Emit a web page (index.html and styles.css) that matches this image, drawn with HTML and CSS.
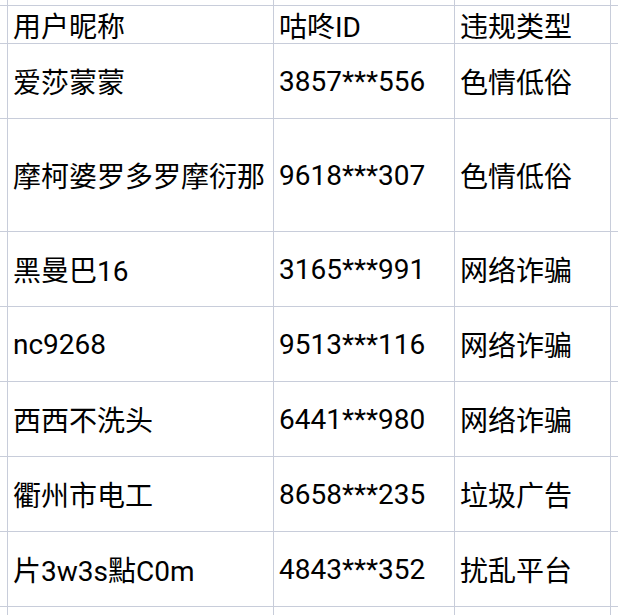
FILE: index.html
```html
<!DOCTYPE html>
<html lang="zh-CN">
<head>
    <meta charset="UTF-8">
    <title>违规用户列表</title>
    <link rel="stylesheet" href="styles.css">
</head>
<body>
    <div class="sheet">
        <!-- top spacer row -->
        <div class="cell"></div><div class="cell"></div><div class="cell"></div><div class="cell"></div><div class="cell"></div>

        <div class="cell"></div>
        <div class="cell">用户昵称</div>
        <div class="cell">咕咚ID</div>
        <div class="cell">违规类型</div>
        <div class="cell"></div>

        <div class="cell"></div>
        <div class="cell">爱莎蒙蒙</div>
        <div class="cell">3857***556</div>
        <div class="cell">色情低俗</div>
        <div class="cell"></div>

        <div class="cell"></div>
        <div class="cell">摩柯婆罗多罗摩衍那</div>
        <div class="cell">9618***307</div>
        <div class="cell">色情低俗</div>
        <div class="cell"></div>

        <div class="cell"></div>
        <div class="cell">黑曼巴16</div>
        <div class="cell">3165***991</div>
        <div class="cell">网络诈骗</div>
        <div class="cell"></div>

        <div class="cell"></div>
        <div class="cell">nc9268</div>
        <div class="cell">9513***116</div>
        <div class="cell">网络诈骗</div>
        <div class="cell"></div>

        <div class="cell"></div>
        <div class="cell">西西不洗头</div>
        <div class="cell">6441***980</div>
        <div class="cell">网络诈骗</div>
        <div class="cell"></div>

        <div class="cell"></div>
        <div class="cell">衢州市电工</div>
        <div class="cell">8658***235</div>
        <div class="cell">垃圾广告</div>
        <div class="cell"></div>

        <div class="cell"></div>
        <div class="cell">片3w3s點C0m</div>
        <div class="cell">4843***352</div>
        <div class="cell">扰乱平台</div>
        <div class="cell"></div>

        <!-- next (empty) row -->
        <div class="cell"></div><div class="cell"></div><div class="cell"></div><div class="cell"></div><div class="cell"></div>
    </div>
</body>
</html>
```

FILE: styles.css
```css
html, body {
    margin: 0;
    height: 100%;
    overflow: hidden;
    background-color: #ffffff;
}
.sheet {
    display: grid;
    grid-template-columns: 7px 265px 180px 155px 1fr;
    grid-template-rows: 5px 37px 74px 112px 74px 74px 74px 74px 74px 1fr;
    gap: 1px;
    height: 100vh;
    background-color: #c8cdda; /* grid lines */
    font-family: Roboto, "Noto Sans CJK SC", sans-serif;
    font-size: 28px;
    color: #000000;
}
.cell {
    display: flex;
    align-items: center;
    padding-left: 5px;
    background-color: #ffffff;
    white-space: nowrap;
    overflow: hidden;
}
```
